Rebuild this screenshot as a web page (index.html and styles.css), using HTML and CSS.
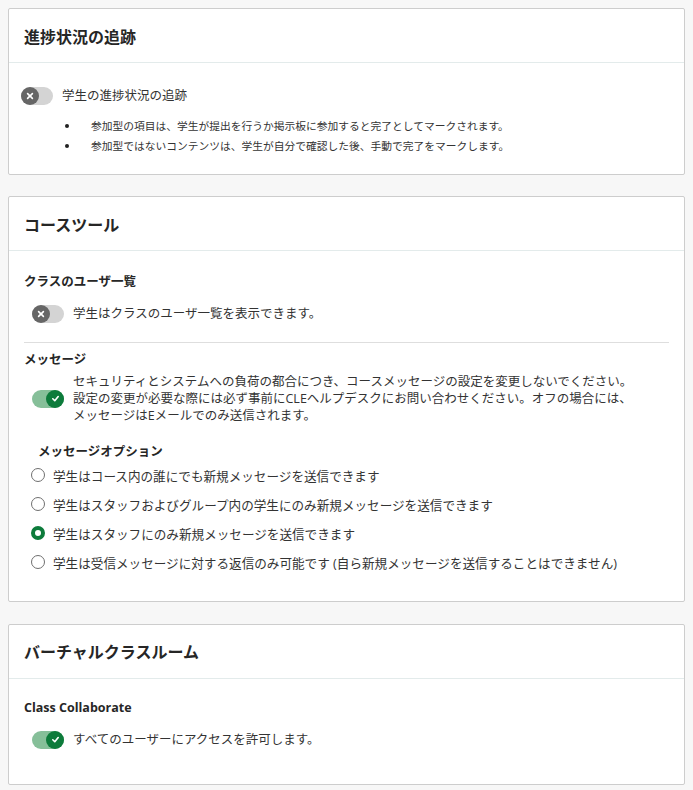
FILE: index.html
```html
<!DOCTYPE html>
<html lang="ja">
<head>
<meta charset="utf-8">
<title>設定</title>
<link rel="stylesheet" href="styles.css">
</head>
<body>
<section class="card">
  <header class="card-head"><h2>進捗状況の追跡</h2></header>
  <div class="card-body body-progress">
    <div class="toggle-row flush">
      <span class="toggle off"><span class="knob"><svg viewBox="0 0 10 10" width="8" height="8"><path d="M2 2 L8 8 M8 2 L2 8" stroke="#fff" stroke-width="2" stroke-linecap="round"/></svg></span></span>
      <span class="toggle-text">学生の進捗状況の追跡</span>
    </div>
    <ul class="bullets">
      <li>参加型の項目は、学生が提出を行うか掲示板に参加すると完了としてマークされます。</li>
      <li>参加型ではないコンテンツは、学生が自分で確認した後、手動で完了をマークします。</li>
    </ul>
  </div>
</section>

<section class="card">
  <header class="card-head"><h2>コースツール</h2></header>
  <div class="card-body body-tools">
    <h3 class="label">クラスのユーザ一覧</h3>
    <div class="toggle-row">
      <span class="toggle off"><span class="knob"><svg viewBox="0 0 10 10" width="8" height="8"><path d="M2 2 L8 8 M8 2 L2 8" stroke="#fff" stroke-width="2" stroke-linecap="round"/></svg></span></span>
      <span class="toggle-text">学生はクラスのユーザ一覧を表示できます。</span>
    </div>
    <hr class="divider">
    <h3 class="label label-msg">メッセージ</h3>
    <div class="toggle-row msg-row">
      <span class="toggle on"><span class="knob"><svg viewBox="0 0 10 10" width="9" height="9"><path d="M2 5.3 L4.2 7.4 L8 2.8" stroke="#fff" stroke-width="1.8" fill="none" stroke-linecap="round" stroke-linejoin="round"/></svg></span></span>
      <span class="toggle-text multi">セキュリティとシステムへの負荷の都合につき、コースメッセージの設定を変更しないでください。<br>設定の変更が必要な際には必ず事前にCLEヘルプデスクにお問い合わせください。オフの場合には、<br>メッセージはEメールでのみ送信されます。</span>
    </div>
    <h4 class="label sub-label">メッセージオプション</h4>
    <ul class="radios">
      <li><span class="radio"></span><span>学生はコース内の誰にでも新規メッセージを送信できます</span></li>
      <li><span class="radio"></span><span>学生はスタッフおよびグループ内の学生にのみ新規メッセージを送信できます</span></li>
      <li><span class="radio checked"></span><span>学生はスタッフにのみ新規メッセージを送信できます</span></li>
      <li><span class="radio"></span><span>学生は受信メッセージに対する返信のみ可能です (自ら新規メッセージを送信することはできません)</span></li>
    </ul>
  </div>
</section>

<section class="card card-last">
  <header class="card-head"><h2>バーチャルクラスルーム</h2></header>
  <div class="card-body body-virtual">
    <h3 class="label">Class Collaborate</h3>
    <div class="toggle-row">
      <span class="toggle on"><span class="knob"><svg viewBox="0 0 10 10" width="9" height="9"><path d="M2 5.3 L4.2 7.4 L8 2.8" stroke="#fff" stroke-width="1.8" fill="none" stroke-linecap="round" stroke-linejoin="round"/></svg></span></span>
      <span class="toggle-text">すべてのユーザーにアクセスを許可します。</span>
    </div>
  </div>
</section>
</body>
</html>
```

FILE: styles.css
```css
html, body {
  margin: 0;
  padding: 0;
}
body {
  background: #f7f7f7;
  padding: 8px;
  font-family: "Open Sans", "Noto Sans CJK JP", sans-serif;
  color: #333;
}
.card {
  background: #fff;
  border: 1px solid #cdcdcd;
  border-radius: 2px;
  margin-bottom: 21px;
}
.card-last {
  margin-top: 22px;
}
.card-head {
  height: 54px;
  padding: 2px 15px 0;
  box-sizing: border-box;
  display: flex;
  align-items: center;
  border-bottom: 1px solid #e3ebeb;
}
.card-head h2 {
  margin: 0;
  font-size: 16px;
  line-height: 20px;
  font-weight: 700;
  color: #262626;
}
.card-body {
  padding: 0 15px;
}
.body-progress {
  padding-top: 23px;
  padding-bottom: 18px;
}
.body-tools {
  padding-top: 21px;
  padding-bottom: 24px;
}
.body-virtual {
  padding-top: 19px;
  padding-bottom: 34px;
}
.label {
  margin: 0;
  font-size: 12.5px;
  line-height: 20px;
  font-weight: 700;
  color: #262626;
}
.toggle-row {
  display: flex;
  align-items: center;
  gap: 9px;
  margin-top: 12px;
  padding-left: 8px;
  font-size: 12.5px;
  line-height: 20px;
}
.toggle-row.flush {
  margin-top: 0;
  margin-left: -3px;
  padding-left: 0;
}
.toggle {
  flex: none;
  width: 32px;
  height: 18px;
  border-radius: 9px;
  display: flex;
  align-items: center;
}
.toggle.off {
  background: #d4d4d4;
  justify-content: flex-start;
}
.toggle.on {
  background: #86bf99;
  justify-content: flex-end;
}
.knob {
  width: 18px;
  height: 18px;
  border-radius: 50%;
  display: flex;
  align-items: center;
  justify-content: center;
}
.off .knob { background: #666; }
.on .knob { background: #0d7b3b; }
.toggle-text { color: #333; }
.toggle-text.multi { line-height: 17px; }
.bullets {
  list-style: none;
  margin: 10px 0 0;
  padding: 0 0 0 41px;
  font-size: 10.75px;
  line-height: 20px;
  color: #333;
}
.bullets li {
  display: flex;
  align-items: center;
}
.bullets li::before {
  content: "";
  width: 4px;
  height: 4px;
  border-radius: 50%;
  background: #222;
  margin-right: 22px;
  flex: none;
}
.divider {
  border: 0;
  border-top: 1px solid #dedede;
  margin: 18px 0 0;
}
.label-msg { margin-top: 7px; }
.msg-row { margin-top: 3px; }
.sub-label {
  margin-top: 18px;
  padding-left: 14px;
}
.radios {
  list-style: none;
  margin: -1.5px 0 0;
  padding: 0 0 0 7px;
  font-size: 12.6px;
  color: #333;
}
.radios li {
  height: 29px;
  display: flex;
  align-items: center;
  gap: 8px;
}
.radio {
  flex: none;
  width: 14px;
  height: 14px;
  box-sizing: border-box;
  border: 1px solid #6f6f6f;
  border-radius: 50%;
  background: #fff;
}
.radio.checked {
  border: 4.5px solid #0d7b3b;
}
```
